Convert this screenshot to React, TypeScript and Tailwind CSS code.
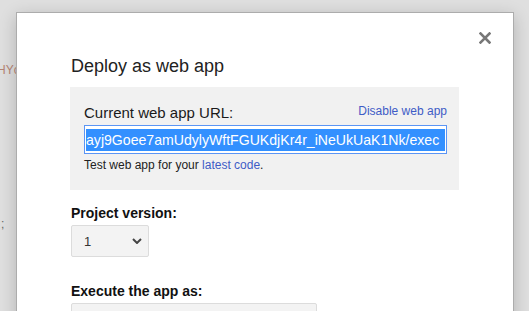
import React from "react";

export default function App() {
  return (
    <div className="relative w-[529px] h-[311px] overflow-hidden bg-[#dfdfdf] font-['Liberation_Sans',Arial,sans-serif]">
      <span className="absolute left-[-3px] top-[63px] text-[12px] leading-[14px] text-[#b58474]">HYc</span>
      <span className="absolute left-[1px] top-[217px] text-[12px] leading-[14px] text-[#666]">;</span>
      <div className="absolute left-[16px] top-[12px] w-[498px] h-[330px] bg-white border border-[#acacac] shadow-[0_4px_16px_rgba(0,0,0,0.2)]">
        <button className="absolute right-[22px] top-[19px] w-[12px] h-[12px] flex items-center justify-center" aria-label="Close">
          <svg width="12" height="12" viewBox="0 0 12 12">
            <path d="M1.5 1.5 L10.5 10.5 M10.5 1.5 L1.5 10.5" stroke="#777" strokeWidth="2.6" strokeLinecap="square" />
          </svg>
        </button>
        <div className="pl-[54px] pt-[43px]">
          <h1 className="text-[18px] leading-[21px] text-[#222] font-normal">Deploy as web app</h1>
          <div className="mt-[10px] w-[389px] -ml-px bg-[#f1f1f1] pl-[14px] pr-[12px] pt-[17px] pb-[18px]">
            <div className="flex justify-between items-start">
              <span className="text-[15px] leading-[17px] text-[#1a1a1a]">Current web app URL:</span>
              <a className="text-[12px] leading-[14px] text-[#3e5cc6]">Disable web app</a>
            </div>
            <div className="mt-[4px] w-[363px] h-[29px] border border-[#5b95f5] bg-white flex items-center px-[1px] overflow-hidden">
              <span className="bg-[#3390ff] text-white text-[14.1px] leading-[22px] whitespace-nowrap w-full">
                ayj9Goee7amUdylyWftFGUKdjKr4r_iNeUkUaK1Nk/exec
              </span>
            </div>
            <div className="mt-[4px] text-[12px] leading-[14px] text-[#222]">
              Test web app for your <a className="text-[#3e5cc6]">latest code</a>.
            </div>
          </div>
          <div className="mt-[15px] text-[14px] leading-[16px] font-bold text-[#111]">Project version:</div>
          <div className="mt-[4px] w-[78px] h-[32px] bg-[#f3f3f3] border border-[#dcdcdc] rounded-[2px] flex items-center justify-between pl-[12px] pr-[6px]">
            <span className="text-[13px] leading-[15px] text-[#333]">1</span>
            <svg width="10" height="6" viewBox="0 0 10 6">
              <path d="M1 1 L5 5 L9 1" stroke="#444" strokeWidth="2" fill="none" />
            </svg>
          </div>
          <div className="mt-[26px] text-[14px] leading-[16px] font-bold text-[#111]">Execute the app as:</div>
          <div className="mt-[4px] w-[246px] h-[32px] bg-[#f3f3f3] border border-[#dcdcdc] rounded-[2px]"></div>
        </div>
      </div>
    </div>
  );
}
